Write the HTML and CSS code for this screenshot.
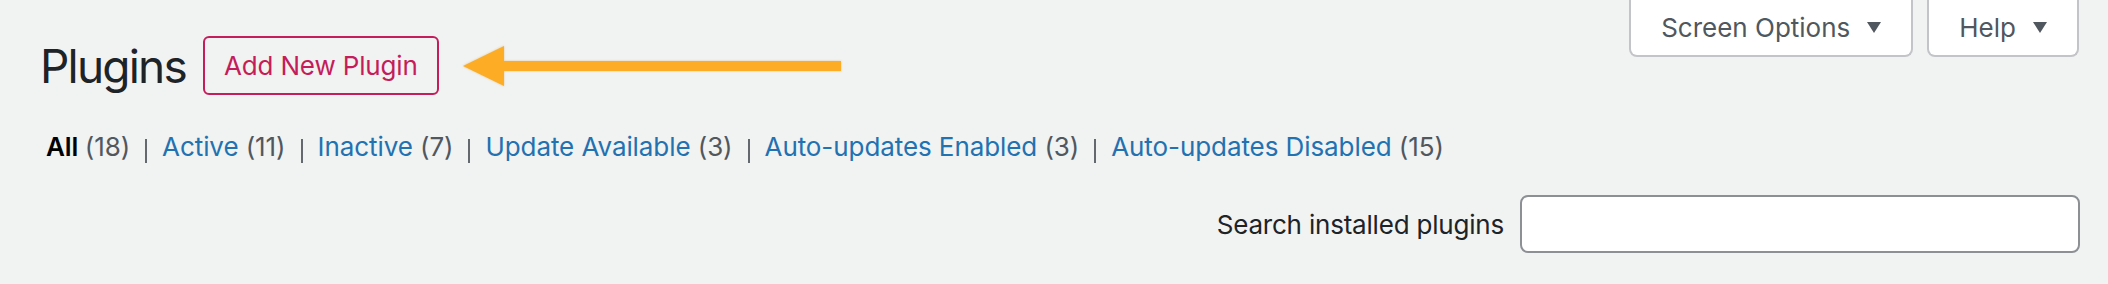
FILE: index.html
```html
<!DOCTYPE html>
<html lang="en">
<head>
    <meta charset="UTF-8">
    <title>Plugins</title>
    <link rel="stylesheet" href="styles.css">
</head>
<body>
    <div class="screen-meta-links">
        <button class="meta-toggle">Screen Options
            <svg class="caret" width="14" height="11" viewBox="0 0 14 11"><polygon points="0,0 14,0 7,11"/></svg>
        </button>
        <button class="meta-toggle">Help
            <svg class="caret" width="14" height="11" viewBox="0 0 14 11"><polygon points="0,0 14,0 7,11"/></svg>
        </button>
    </div>

    <div class="wrap">
        <div class="title-row">
            <h1>Plugins</h1>
            <a class="title-action" href="#">Add New Plugin</a>
            <!-- annotation arrow pointing at the button -->
            <svg class="pointer" width="380" height="42" viewBox="0 0 380 42">
                <polygon points="0,21 41,1 41,41"/>
                <rect x="40" y="16" width="338" height="10"/>
            </svg>
        </div>

        <ul class="filters">
            <li><a class="current" href="#">All <span class="count">(18)</span></a><span class="sep"></span></li>
            <li><a href="#">Active <span class="count">(11)</span></a><span class="sep"></span></li>
            <li><a href="#">Inactive <span class="count">(7)</span></a><span class="sep"></span></li>
            <li><a href="#">Update Available <span class="count">(3)</span></a><span class="sep"></span></li>
            <li><a href="#">Auto-updates Enabled <span class="count">(3)</span></a><span class="sep"></span></li>
            <li><a href="#">Auto-updates Disabled <span class="count">(15)</span></a></li>
        </ul>

        <div class="search-box">
            <label for="plugin-search">Search installed plugins</label>
            <input type="search" id="plugin-search">
        </div>
    </div>
</body>
</html>
```

FILE: styles.css
```css
body { margin: 0; background: #f1f2f2; font-family: Inter, "Noto Sans", sans-serif; font-size: 26px; color: #1d2327; }

.screen-meta-links { float: right; display: flex; gap: 14px; padding-right: 29px; }
.meta-toggle { display: flex; align-items: center; gap: 17px; height: 57px; padding: 0 30px; background: #fff; border: 2px solid #c3c4c7; border-top: none; border-radius: 0 0 8px 8px; font-family: inherit; font-size: 26px; color: #50575e; }
.caret { fill: #50575e; }

.wrap { padding-left: 40px; }
.title-row { display: flex; align-items: center; padding-top: 36px; }
h1 { margin: 0; font-size: 46px; font-weight: 400; line-height: normal; letter-spacing: -1.8px; color: #1d2327; }
.title-action { display: flex; align-items: center; height: 55px; margin-left: 17px; padding: 0 19px; border: 2px solid #c41d5a; border-radius: 6px; color: #c41d5a; text-decoration: none; font-size: 26px; letter-spacing: -0.15px; }
.pointer { margin-left: 24px; fill: #fcad25; filter: drop-shadow(0 0 1px rgba(200, 140, 20, 0.4)); }

.filters { display: flex; align-items: center; margin: 32px 0 0; padding: 0 0 0 6px; list-style: none; line-height: 40px; letter-spacing: -0.08px; color: #50575e; }
.filters li { display: flex; align-items: center; }
.filters a { color: #2271b1; text-decoration: none; }
.filters a.current { color: #000; font-weight: 600; }
.filters .count { color: #50575e; font-weight: 400; }
.sep { width: 2px; height: 24px; margin: 8px 15px 0; background: #646970; }

.search-box { display: flex; justify-content: flex-end; align-items: center; gap: 16px; margin-top: 28px; padding-right: 28px; }
.search-box label { color: #1d2327; letter-spacing: -0.2px; }
.search-box input { width: 560px; height: 58px; box-sizing: border-box; border: 2px solid #8c8f94; border-radius: 8px; background: #fff; }
```
